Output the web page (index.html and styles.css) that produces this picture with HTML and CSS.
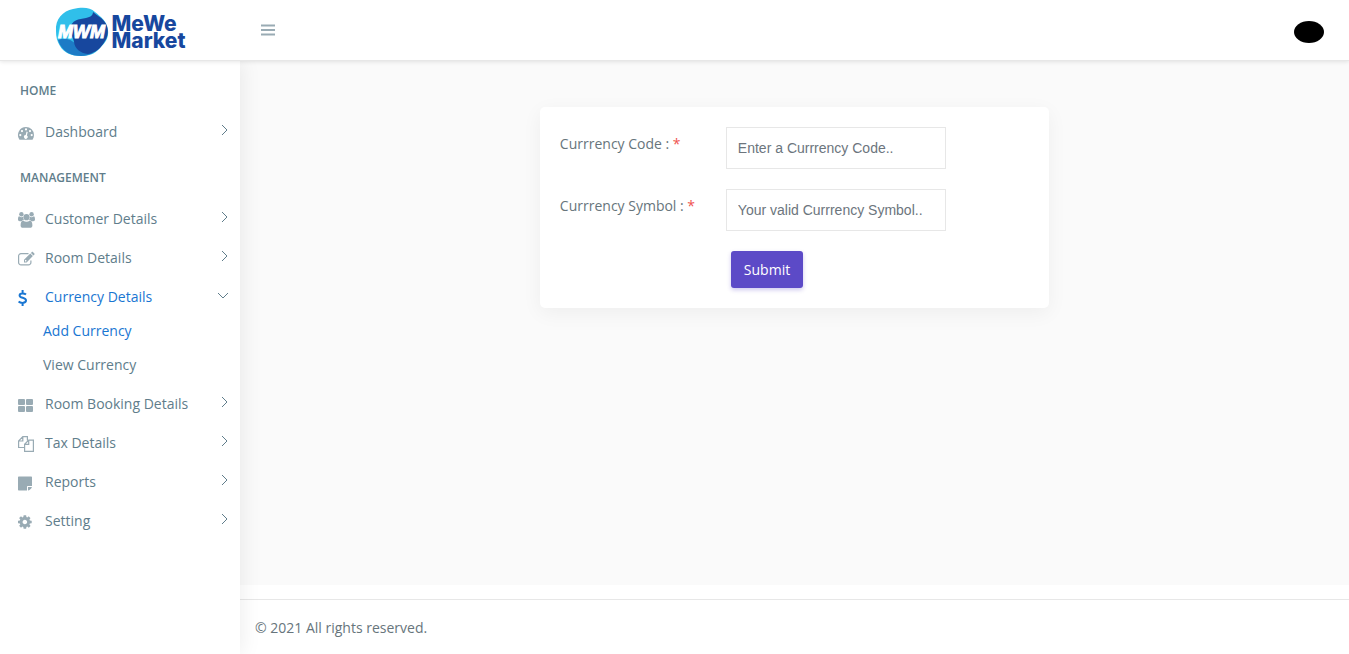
FILE: index.html
```
<!DOCTYPE html>
<html lang="en">
<head>
    <meta charset="UTF-8">
    <meta name="viewport" content="width=device-width, initial-scale=1.0">
    <title>MeWe Market - Add Currency</title>
    <link rel="stylesheet" href="styles.css">
</head>
<body>
    <header class="topbar">
        <a class="logo" href="#">
            <svg class="logo-mark" viewBox="0 0 54 50" role="img" aria-label="MWM">
                <path fill="#30bfea" d="M1 24C0 12 8 4 18 2c9-2 17-2 22 3 6 5 12 9 13 18 1 8-3 13-8 18-5 6-11 8-19 8-9 0-17-3-21-10-3-5-4-9-4-15z"/>
                <path fill="#1d7bc6" d="M3 33c8-3 14 0 19 5 4 5 9 8 16 8-4 2-8 3-12 3-10 0-19-4-23-16z"/>
                <path fill="#17479e" d="M38 5c3 3 8 5 11 9 5 6 5 14 1 20-4 7-9 12-17 13-8-1-13-5-14-12-1-6-4-8-4-13 1-9 9-10 16-11 5-1 7-3 7-6z"/>
                <text class="logo-letters" x="3" y="31">MWM</text>
            </svg>
            <span class="logo-text">MeWe<br>Market</span>
        </a>
        <button class="menu-toggle" type="button" aria-label="Toggle menu">
            <svg width="14" height="12" viewBox="0 0 14 12"><path d="M0 1.500h14M0 6h14M0 10.500h14"/></svg>
        </button>
        <button class="profile" type="button" aria-label="Profile"></button>
    </header>

    <div class="wrapper">
        <aside class="sidebar">
            <nav>
                <h2 class="nav-label">Home</h2>
                <ul class="nav-list">
                    <li><a class="nav-link" href="#">
                        <svg class="nav-icon" viewBox="0 0 16 16"><path fill-rule="evenodd" d="M8 2a8 8 0 0 1 8 8c0 1.600-.4 3-1.200 4.300-.2.400-.4.500-.8.500H2c-.4 0-.6-.1-.8-.5A8 8 0 0 1 8 2zM2.300 9a1.100 1.100 0 1 0 0 2.200 1.100 1.100 0 0 0 0-2.200zM4 5a1.100 1.100 0 1 0 0 2.200A1.100 1.100 0 0 0 4 5zm4-1.700a1.100 1.100 0 1 0 0 2.200 1.100 1.100 0 0 0 0-2.200zM12 5a1.100 1.100 0 1 0 0 2.200A1.100 1.100 0 0 0 12 5zm1.700 4a1.100 1.100 0 1 0 0 2.200 1.100 1.100 0 0 0 0-2.200zM8.600 6.600l-.9 3.500a1.800 1.800 0 1 0 1.200.4l.8-3.600z"/></svg>
                        <span>Dashboard</span>
                        <svg class="arrow" viewBox="0 0 12 12"><path d="M4 1l5 5-5 5"/></svg>
                    </a></li>
                </ul>
                <h2 class="nav-label">Management</h2>
                <ul class="nav-list">
                    <li><a class="nav-link" href="#">
                        <svg class="nav-icon wide" viewBox="0 0 17 16"><circle cx="3.400" cy="2.300" r="2.200"/><circle cx="13.600" cy="2.300" r="2.200"/><path d="M1.200 4.300c1.200 1 2.800 1.100 4 .4-.2 1.500.2 2.600 1 3.400-1.200 0-2 .4-2.600 1.100H1.800C.7 9.200 0 8.600 0 7.600c0-1.600.3-3.300 1.200-3.300zM15.800 4.300c-1.200 1-2.800 1.100-4 .4.2 1.500-.2 2.600-1 3.400 1.200 0 2 .4 2.600 1.100h1.800c1.100 0 1.800-.6 1.800-1.600 0-1.600-.3-3.300-1.200-3.300z"/><circle cx="8.500" cy="5.200" r="3.100"/><path d="M5.200 8.500c2 1.700 4.600 1.700 6.600 0 1.800.2 2.600 2 2.600 4.900 0 1.500-.9 2.400-2.400 2.400H5c-1.500 0-2.400-.9-2.400-2.400 0-2.900.8-4.700 2.600-4.900z"/></svg>
                        <span>Customer Details</span>
                        <svg class="arrow" viewBox="0 0 12 12"><path d="M4 1l5 5-5 5"/></svg>
                    </a></li>
                    <li><a class="nav-link" href="#">
                        <svg class="nav-icon" viewBox="0 0 16 16"><path class="line" d="M10.500 2.600H3A2.400 2.400 0 0 0 .6 5v6.500A2.400 2.400 0 0 0 3 13.900h7.500a2.400 2.400 0 0 0 2.400-2.400v-2"/><path fill-rule="evenodd" d="M12.300 2.500l2.600 2.600-6.300 6.300H6V8.800zM7 9.300v1.100h1.100l.6-.6-1.100-1.100zM12.900 1.900l.7-.7c.5-.5 1-.5 1.500 0l1.100 1.100c.5.500.5 1 0 1.500l-.7.700z"/></svg>
                        <span>Room Details</span>
                        <svg class="arrow" viewBox="0 0 12 12"><path d="M4 1l5 5-5 5"/></svg>
                    </a></li>
                    <li>
                        <a class="nav-link active" href="#">
                            <svg class="nav-icon" viewBox="0 0 16 16"><path class="dollar" d="M8 4.600C6.500 3.300 1.600 2.900 1.600 5.400c0 3 6.400 1.800 6.400 5.200 0 2.800-5.200 2.900-7.400 1M4.600 0v3M4.600 13v3"/></svg>
                            <span>Currency Details</span>
                            <svg class="arrow" viewBox="0 0 12 12"><path d="M0 4l5 5 5-5"/></svg>
                        </a>
                        <ul class="sub-list">
                            <li><a class="active" href="#">Add Currency</a></li>
                            <li><a href="#">View Currency</a></li>
                        </ul>
                    </li>
                    <li><a class="nav-link" href="#">
                        <svg class="nav-icon" viewBox="0 0 16 16"><rect y="2" width="7" height="6" rx="1"/><rect x="8" y="2" width="7" height="6" rx="1"/><rect y="9" width="7" height="6" rx="1"/><rect x="8" y="9" width="7" height="6" rx="1"/></svg>
                        <span>Room Booking Details</span>
                        <svg class="arrow" viewBox="0 0 12 12"><path d="M4 1l5 5-5 5"/></svg>
                    </a></li>
                    <li><a class="nav-link" href="#">
                        <svg class="nav-icon" viewBox="0 0 16 16"><path class="line" d="M6 11.500H.6V5L4.800.6h4.600v4M4.800.6V5H.6M10.700 4.100h4.700v11.300H6.600V8.300zM10.700 4.100v4.200H6.600"/></svg>
                        <span>Tax Details</span>
                        <svg class="arrow" viewBox="0 0 12 12"><path d="M4 1l5 5-5 5"/></svg>
                    </a></li>
                    <li><a class="nav-link" href="#">
                        <svg class="nav-icon" viewBox="0 0 16 16"><path d="M1 1.500h12c.6 0 1 .4 1 1V11h-4c-.6 0-1 .4-1 1v3.500H1c-.6 0-1-.4-1-1v-12c0-.6.4-1 1-1zM10 12h3.900c-.1.600-.3 1-.7 1.400l-1.400 1.400c-.4.400-1 .6-1.800.7z"/></svg>
                        <span>Reports</span>
                        <svg class="arrow" viewBox="0 0 12 12"><path d="M4 1l5 5-5 5"/></svg>
                    </a></li>
                    <li><a class="nav-link" href="#">
                        <svg class="nav-icon" viewBox="128 0 1792 1792"><path d="M1152 896q0-106-75-181t-181-75-181 75-75 181 75 181 181 75 181-75 75-181zm512-109v222q0 12-8 23t-20 13l-185 28q-19 54-39 91 35 50 107 138 10 12 10 25t-9 23q-27 37-99 108t-94 71q-12 0-26-9l-138-108q-44 23-91 38-16 136-29 186-7 28-36 28h-222q-14 0-24.500-8.500t-11.500-21.500l-28-184q-49-16-90-37l-141 107q-10 9-25 9-14 0-25-11-126-114-165-168-7-10-7-23 0-12 8-23 15-21 51-66.500t54-70.500q-27-50-41-99l-183-27q-13-2-21-12.500t-8-23.500v-222q0-12 8-23t19-13l186-28q14-46 39-92-40-57-107-138-10-12-10-24 0-10 9-23 26-36 98.500-107.500t94.500-71.500q13 0 26 10l138 107q44-23 91-38 16-136 29-186 7-28 36-28h222q14 0 24.500 8.500t11.500 21.500l28 184q49 16 90 37l142-107q9-9 24-9 13 0 25 10 129 119 165 170 7 8 7 22 0 12-8 23-15 21-51 66.500t-54 70.500q26 50 41 98l183 28q13 2 21 12.500t8 23.500z"/></svg>
                        <span>Setting</span>
                        <svg class="arrow" viewBox="0 0 12 12"><path d="M4 1l5 5-5 5"/></svg>
                    </a></li>
                </ul>
            </nav>
        </aside>

        <div class="page">
            <main class="content">
                <form class="card">
                    <label for="currency-code">Currrency Code : <span class="required">*</span></label>
                    <input type="text" id="currency-code" placeholder="Enter a Currrency Code..">
                    <label for="currency-symbol">Currrency Symbol : <span class="required">*</span></label>
                    <input type="text" id="currency-symbol" placeholder="Your valid Currrency Symbol..">
                    <button class="submit" type="submit">Submit</button>
                </form>
            </main>
            <footer class="footer">© 2021 All rights reserved.</footer>
        </div>
    </div>
</body>
</html>
```
FILE: styles.css
```
* {
    margin: 0;
    padding: 0;
    box-sizing: border-box;
}

body {
    display: flex;
    flex-direction: column;
    min-height: 100vh;
    background: #ffffff;
    color: #67757c;
    font-family: "Open Sans", sans-serif;
    font-size: 14px;
    line-height: 20px;
}

a {
    color: inherit;
    text-decoration: none;
}

ul {
    list-style: none;
}

button {
    border: none;
    cursor: pointer;
}

/* Top bar */
.topbar {
    position: relative;
    z-index: 2;
    display: flex;
    align-items: center;
    height: 61px;
    padding-right: 25px;
    background: #ffffff;
    border-bottom: 1px solid #e7e7e7;
    box-shadow: 0 1px 4px rgba(0, 0, 0, 0.1);
}

.logo {
    display: flex;
    align-items: center;
    justify-content: center;
    gap: 3px;
    width: 240px;
    padding-top: 3px;
}

.logo-mark {
    width: 54px;
    height: 50px;
}

.logo-letters {
    fill: #ffffff;
    stroke: #ffffff;
    stroke-width: 1px;
    font-family: "Liberation Sans", Arial, sans-serif;
    font-size: 18px;
    font-weight: 700;
    font-style: italic;
}

.logo-text {
    color: #17479e;
    font-family: Inter, sans-serif;
    font-size: 21px;
    font-weight: 800;
    line-height: 17px;
}

.menu-toggle {
    display: flex;
    margin-left: 21px;
    background: none;
}

.menu-toggle path {
    stroke: #99abb4;
    stroke-width: 2;
}

.profile {
    width: 30px;
    height: 22px;
    margin-top: 4px;
    margin-left: auto;
    border-radius: 50%;
    background: #000000;
}

/* Sidebar */
.wrapper {
    display: flex;
    flex: 1;
}

.sidebar {
    position: relative;
    z-index: 1;
    width: 240px;
    padding-top: 6px;
    background: #ffffff;
    box-shadow: 1px 0 20px rgba(0, 0, 0, 0.08);
    color: #607d8b;
}

.nav-label {
    padding-left: 20px;
    font-size: 12px;
    font-weight: 600;
    line-height: 48px;
    text-transform: uppercase;
}

.nav-list > li {
    margin-bottom: 5px;
}

.nav-link {
    display: flex;
    align-items: center;
    height: 34px;
    padding: 0 10px 0 18px;
}

.nav-link span {
    flex: 1;
}

.nav-icon {
    width: 16px;
    height: 16px;
    margin-top: 2px;
    margin-right: 11px;
    overflow: visible;
    fill: #99abb4;
}

.nav-icon.wide {
    width: 17px;
    margin-right: 10px;
}

.nav-icon .line {
    fill: none;
    stroke: #99abb4;
    stroke-width: 1.2;
}

.nav-icon .dollar {
    fill: none;
    stroke: #1976d2;
    stroke-width: 2;
}

.arrow {
    width: 12px;
    height: 12px;
    margin-bottom: 4px;
    fill: none;
    stroke: #607d8b;
    stroke-width: 1;
}

.active {
    color: #1976d2;
}

.sub-list a {
    display: block;
    padding-left: 43px;
    line-height: 34px;
}

/* Content */
.page {
    display: flex;
    flex: 1;
    flex-direction: column;
}

.content {
    flex: 1;
    padding: 46px 15px;
    background: #fafafa;
}

.card {
    display: grid;
    grid-template-columns: 166px 220px;
    row-gap: 20px;
    width: 47.2%;
    min-width: 426px;
    margin: 0 auto;
    padding: 20px;
    background: #ffffff;
    border-radius: 5px;
    box-shadow: 0 5px 20px rgba(0, 0, 0, 0.05);
}

.card label {
    padding-top: 7px;
}

.required {
    color: #ef5350;
}

.card input {
    height: 42px;
    padding: 0 11px;
    border: 1px solid #e7e7e7;
    color: #67757c;
    font-family: "Liberation Sans", Arial, sans-serif;
    font-size: 14px;
}

.card input::placeholder {
    color: #6c757d;
}

.submit {
    grid-column: 2;
    justify-self: start;
    height: 37px;
    margin-left: 5px;
    padding: 0 13px;
    background: #5c4ac7;
    border-radius: 3px;
    box-shadow: 0 2px 4px rgba(92, 74, 199, 0.3);
    color: #ffffff;
    font-family: "Open Sans", sans-serif;
    font-size: 14px;
}

.footer {
    margin-top: 14px;
    padding: 18px 15px 16px;
    border-top: 1px solid #e7e7e7;
}
```
